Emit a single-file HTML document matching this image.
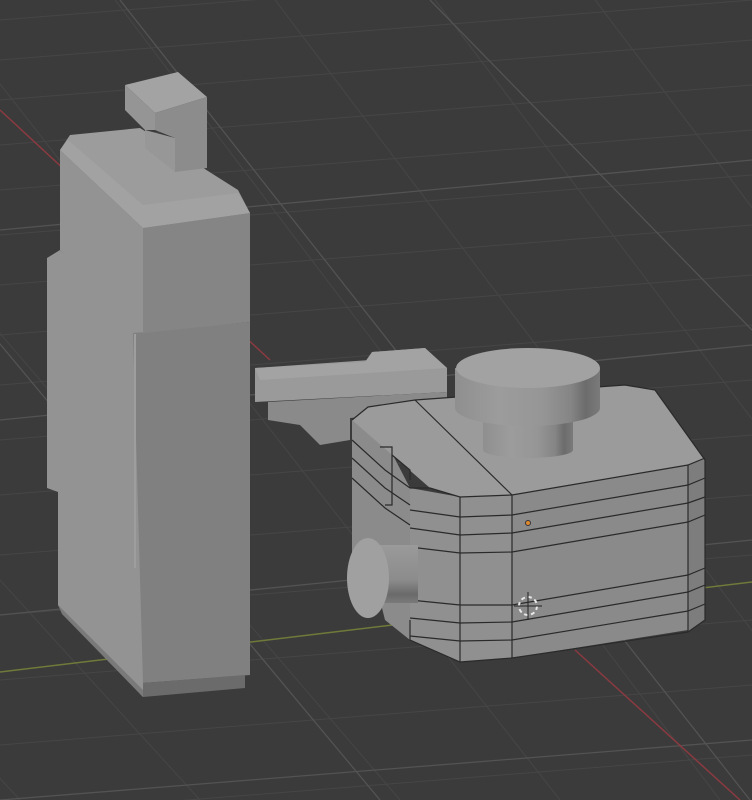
<!DOCTYPE html>
<html><head><style>html,body{margin:0;padding:0;background:#3b3b3b;overflow:hidden}svg{display:block}</style></head>
<body>
<svg width="752" height="800" viewBox="0 0 752 800" xmlns="http://www.w3.org/2000/svg">
<defs>
<linearGradient id="cyl" x1="0" x2="1" y1="0" y2="0">
<stop offset="0" stop-color="#8f8f8f"/><stop offset="0.3" stop-color="#9c9c9c"/><stop offset="0.6" stop-color="#969696"/><stop offset="0.8" stop-color="#858585"/><stop offset="0.9" stop-color="#6c6c6c"/><stop offset="1" stop-color="#7a7a7a"/>
</linearGradient>
<linearGradient id="cyl2" x1="0" x2="0" y1="0" y2="1">
<stop offset="0" stop-color="#9a9a9a"/><stop offset="0.6" stop-color="#8c8c8c"/><stop offset="0.85" stop-color="#6a6a6a"/><stop offset="1" stop-color="#7a7a7a"/>
</linearGradient>
</defs>
<rect width="752" height="800" fill="#3b3b3b"/>
<g stroke="#464646" stroke-width="1">
<path d="M0 20 L752 -40 M0 60 L752 0 M0 100 L752 40 M0 145 L752 85 M0 190 L752 130 M0 235 L752 175 M0 285 L752 225 M0 335 L752 275 M0 385 L752 325 M0 440 L752 380 M0 495 L752 435 M0 555 L752 495 M0 615 L752 555 M0 680 L752 620 M0 745 L752 685 M0 815 L752 755"/>
<path d="M-200 100 L400 800 M-50 20 L560 800 M100 -20 L720 800 M260 -20 L880 800 M420 -20 L1040 800 M580 -20 L1200 800 M-300 250 L200 800 M-350 400 L20 800"/>
</g>
<g stroke="#535353" stroke-width="1.3">
<path d="M0 230 L752 160 M0 420 L752 345 M0 615 L752 540 M0 800 L752 740"/>
<path d="M120 0 L750 800 M-120 200 L380 800 M430 0 L752 330"/>
</g>
<path d="M0 110 L270 360 M575 650 L740 800" stroke="#8a3a40" stroke-width="1.5"/>
<path d="M0 672 L752 582" stroke="#6f7a3a" stroke-width="1.5"/>

<!-- tall object -->
<g stroke="none">
<polygon points="47,258 60,250 143,328 143,697 62,612 58,605 58,492 47,488" fill="#939393"/>
<polygon points="58,605 143,690 143,697 62,614" fill="#7a7a7a"/>
<polygon points="133,333 250,322 250,675 143,683" fill="#808080"/>
<polygon points="143,683 245,675 245,688 143,697" fill="#6b6b6b"/>
<line x1="135" y1="334" x2="135" y2="568" stroke="#9e9e9e" stroke-width="2"/>
<polygon points="60,150 143,228 143,333 60,250" fill="#939393"/>
<polygon points="143,228 250,213 250,322 143,333" fill="#858585"/>
<polygon points="60,150 70,135 140,128 238,190 250,213 143,228" fill="#9c9c9c"/>
<polygon points="60,150 68,140 143,205 238,193 250,213 143,228" fill="#a2a2a2"/>
<!-- tab -->
<polygon points="125,85 178,72 207,97 155,113" fill="#a3a3a3"/>
<polygon points="125,85 155,113 155,130 145,130 125,110" fill="#959595"/>
<polygon points="155,113 207,97 207,168 175,172 175,138 155,130" fill="#8c8c8c"/>
<polygon points="145,130 175,138 175,172 145,148" fill="#979797"/>
</g>

<!-- arm -->
<polygon points="255,368 370,360 372,352 425,348 447,368 447,392 255,402" fill="#9a9a9a"/>
<polygon points="255,368 365,362 372,352 425,348 447,368 260,380" fill="#a3a3a3"/>
<polygon points="268,402 447,392 447,410 350,418 350,440 320,445 300,425 268,420" fill="#8a8a8a"/>

<!-- camera body -->
<g>
<polygon points="352,420 368,407 410,488 410,640 385,620 380,600 352,598" fill="#8b8b8b"/>
<polygon points="410,488 460,497 512,495 512,658 460,662 410,640" fill="#909090"/>
<polygon points="352,420 368,407 415,400 625,385 655,390 705,460 700,470 512,495 460,497 430,488" fill="#9b9b9b"/>
<polygon points="512,495 688,465 688,630 512,658" fill="#8a8a8a"/>
<polygon points="688,465 705,458 705,620 688,632" fill="#7d7d7d"/>
<g stroke="#2a2a2a" stroke-width="1.2" fill="none">
<polyline points="352,420 368,407 415,400 625,385 655,390 705,460 705,620 688,632 512,658 460,662 410,640 410,620"/>
<line x1="415" y1="400" x2="512" y2="495"/>
<line x1="512" y1="495" x2="512" y2="658"/>
<line x1="460" y1="497" x2="460" y2="662"/>
<line x1="688" y1="465" x2="688" y2="632"/>
<polyline points="410,488 430,488 460,497 512,495 688,465 705,458"/>
<polyline points="410,510 460,517 512,515 688,485 705,478"/>
<polyline points="410,528 460,535 512,533 688,503 705,497"/>
<polyline points="410,547 460,553 512,552 688,522 705,515"/>
<polyline points="410,600 460,605 512,605 688,575 705,568"/>
<polyline points="410,618 460,623 512,622 688,592 705,585"/>
<polyline points="410,636 460,641 512,640 688,611 705,604"/>
<polyline points="352,440 385,470 410,488"/>
<polyline points="352,458 385,488 410,505"/>
<polyline points="352,478 385,508 410,525"/>
<polyline points="380,447 392,447 392,505 385,505"/>
<polyline points="392,455 410,470 410,480"/>
</g>
<circle cx="528" cy="523" r="2.5" fill="#e08a30" stroke="#333" stroke-width="1"/>
<circle cx="528" cy="606" r="9" fill="none" stroke="#e8e8e8" stroke-width="2" stroke-dasharray="4 3"/>
<path d="M528 592 V620 M514 606 H542" stroke="#222" stroke-width="1"/>
</g>

<!-- big knob -->
<path d="M483 395 V450 A45 8 0 0 0 573 450 V395 Z" fill="url(#cyl)"/>
<path d="M455 368 V408 A72 18 0 0 0 600 408 V368 Z" fill="url(#cyl)"/>
<ellipse cx="528" cy="368" rx="72" ry="20" fill="#a2a2a2"/>

<!-- side knob -->
<path d="M368 545 H418 V603 H368 Z" fill="url(#cyl2)"/>
<ellipse cx="368" cy="578" rx="21" ry="40" fill="#a0a0a0"/>
</svg>
</body></html>
